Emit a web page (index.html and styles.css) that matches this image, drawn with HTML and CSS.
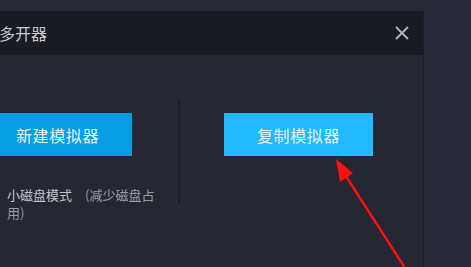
FILE: index.html
```html
<!DOCTYPE html>
<html lang="zh">
<head>
<meta charset="utf-8">
<link rel="stylesheet" href="styles.css">
</head>
<body>
<div class="page">
  <div class="dialog">
    <div class="titlebar">
      <span class="title">多开器</span>
      <svg class="close" width="16" height="16" viewBox="0 0 16 16"><path d="M2 2L14 14M14 2L2 14" stroke="#b4b6bc" stroke-width="1.8" fill="none"/></svg>
    </div>
    <div class="content">
      <div class="col col-left">
        <div class="btn btn-new">新建模拟器</div>
        <div class="note"><span class="note-main">小磁盘模式</span><span class="note-sub">　(减少磁盘占用)</span></div>
      </div>
      <div class="divider"></div>
      <div class="col col-right">
        <div class="btn btn-copy">复制模拟器</div>
      </div>
    </div>
  </div>
  <svg class="arrow" width="471" height="267" viewBox="0 0 471 267">
    <line x1="405" y1="268" x2="342" y2="170" stroke="#ff1010" stroke-width="2.4"/>
    <polygon points="336,159 340,182 353,173" fill="#ff1010"/>
  </svg>
</div>
</body>
</html>
```
FILE: styles.css
```css
html, body {
  margin: 0;
  padding: 0;
}
body {
  background: #272937;
  font-family: "Noto Sans CJK SC", "Noto Sans", sans-serif;
  overflow: hidden;
}
.page {
  position: relative;
  width: 471px;
  height: 267px;
  padding-top: 11px;
  box-sizing: border-box;
}
.dialog {
  width: 424px;
  height: 256px;
  background: #252733;
  border-right: 1px solid #1d1f29;
  box-sizing: border-box;
}
.titlebar {
  height: 44px;
  background: #191b23;
  display: flex;
  align-items: center;
  justify-content: space-between;
  padding-right: 13px;
}
.title {
  color: #c9cacd;
  font-size: 16px;
  margin-left: -1px;
  line-height: 44px;
}
.close {
  display: block;
}
.content {
  display: flex;
  padding-top: 44px;
}
.col-left {
  width: 178px;
  padding-top: 13px;
}
.divider {
  width: 2px;
  height: 104px;
  background: #1b1d28;
}
.col-right {
  padding-left: 43px;
  padding-top: 13px;
}
.btn {
  width: 151px;
  height: 45px;
  box-sizing: border-box;
  border: 1px solid #18283a;
  display: flex;
  align-items: center;
  justify-content: center;
  font-size: 16px;
  letter-spacing: 0.6px;
  color: #e6f3fb;
}
.btn-new {
  background: #079de3;
  margin-left: -18px;
}
.btn-copy {
  background: #22b9fe;
}
.note {
  margin-top: 29px;
  margin-left: 7px;
  width: 150px;
  font-size: 13px;
  line-height: 18px;
}
.note-main {
  color: #c4c5c9;
}
.note-sub {
  color: #9a9ca3;
}
.arrow {
  position: absolute;
  left: 0;
  top: 0;
  pointer-events: none;
}
```
